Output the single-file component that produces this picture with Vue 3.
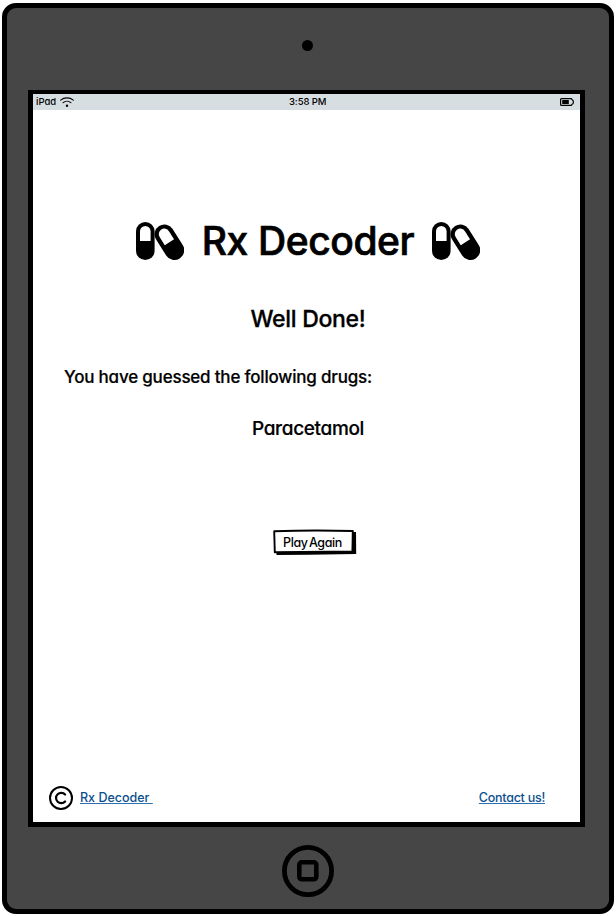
<script setup>
import { h } from 'vue'

const drugs = ['Paracetamol']

const Pills = () =>
  h('svg', { viewBox: '0 0 48 38', width: 48, height: 38, 'aria-hidden': 'true' }, [
    h('rect', { x: 0, y: 0, width: 18.6, height: 38, rx: 9.3 }),
    h('path', { d: 'M4 19V9.2a5.3 5.3 0 0 1 10.6 0V19Z', fill: '#fff' }),
    h('g', { transform: 'translate(33.4 20.2) rotate(-32.4)' }, [
      h('rect', { x: -9.8, y: -19.2, width: 19.6, height: 38.4, rx: 9.8 }),
      h('path', { d: 'M-5.5 0V-9.6a5.5 5.5 0 0 1 11 0V0Z', fill: '#fff' }),
    ]),
  ])
</script>

<template>
  <div class="page">
    <div class="device">
      <div class="top-bezel"><span class="camera"></span></div>
      <div class="screen">
        <header class="status">
          <div class="carrier">
            <span>iPad</span>
            <svg width="14" height="11" viewBox="0 0 14 11" fill="none" stroke="#000" stroke-linecap="round">
              <path d="M.7 3.2C4.2 .1 9.8 .1 13.3 3.2" stroke-width="1.1" />
              <path d="M3.1 5.7C5.3 3.8 8.7 3.8 10.9 5.7" stroke-width="1.1" />
              <circle cx="7" cy="8.8" r="1.2" fill="#000" stroke="none" />
            </svg>
          </div>
          <span class="time">3:58 PM</span>
          <div class="battery">
            <svg width="14" height="8" viewBox="0 0 14 8">
              <path d="M1.5 .6H11.3L12.2 1.8Q13.4 2 13.4 4T12.2 6.2L11.3 7.4H1.5Q.6 7.4 .6 6.5V1.5Q.6 .6 1.5 .6Z" fill="none" stroke="#000" stroke-width="1.2" />
              <rect x="2.2" y="2" width="6.600" height="4" />
            </svg>
          </div>
        </header>
        <main>
          <div class="brand">
            <Pills />
            <h1>Rx Decoder</h1>
            <Pills />
          </div>
          <h2>Well Done!</h2>
          <p class="lead">You have guessed the following drugs:</p>
          <p v-for="drug in drugs" :key="drug" class="drug">{{ drug }}</p>
          <button class="again">
            <svg width="84" height="28" viewBox="0 0 84 28">
              <path d="M3.500 2.500L83 3L83.200 25L35 25.700L3.500 26Z" />
              <path d="M1.200 2.200Q40 1 79.800 2L79.400 22.700Q40 22.300 1.800 23.200Z" fill="#fff" stroke="#000" stroke-width="1.900" stroke-linejoin="round" />
            </svg>
            <span>Play Again</span>
          </button>
        </main>
        <footer>
          <svg width="24" height="24" viewBox="0 0 24 24" fill="none" stroke="#000">
            <circle cx="12" cy="12" r="11" stroke-width="2" />
            <path d="M16.100 8.500A5.200 5.200 0 1 0 16.100 15.500" stroke-width="2.200" stroke-linecap="round" />
          </svg>
          <a class="home">Rx Decoder&nbsp;</a>
          <a class="contact">Contact us!</a>
        </footer>
      </div>
      <div class="bottom-bezel">
        <svg width="52" height="52" viewBox="0 0 52 52" fill="none" stroke="#000">
          <circle cx="26" cy="26" r="23.600" stroke-width="4.800" />
          <rect x="17.300" y="17.300" width="17" height="17" rx="2.500" stroke-width="4.600" />
        </svg>
      </div>
    </div>
  </div>
</template>

<style>
body {
  margin: 0;
  background: #fff;
}
</style>

<style scoped>
.page {
  box-sizing: border-box;
  width: 616px;
  height: 916px;
  padding: 3px 2px 2px;
  font-family: Inter, "Noto Sans", sans-serif;
  font-feature-settings: "cv11";
  color: #000;
}
.device {
  box-sizing: border-box;
  width: 612px;
  height: 911px;
  border: 5px solid #000;
  border-radius: 14px;
  background: #464646;
  display: flex;
  flex-direction: column;
}
.top-bezel {
  height: 82px;
  display: flex;
  justify-content: center;
  align-items: flex-start;
}
.camera {
  width: 11px;
  height: 11px;
  margin: 32px 1px 0 0;
  border-radius: 50%;
  background: #000;
}
.screen {
  box-sizing: border-box;
  width: 557px;
  height: 737px;
  margin-left: 21px;
  border: 5px solid #000;
  border-top-width: 4px;
  background: #fff;
  display: flex;
  flex-direction: column;
}
.status {
  height: 16px;
  flex: none;
  padding: 0 6px 0 3px;
  background: #d7dee1;
  display: grid;
  grid-template-columns: 253px auto 1fr;
  align-items: center;
  font-size: 9.500px;
  line-height: 16px;
  font-weight: 500;
}
.time {
  letter-spacing: -0.1px;
}
.carrier {
  display: flex;
  align-items: center;
  gap: 4px;
}
.battery {
  display: flex;
  justify-content: flex-end;
}
main {
  flex: 1;
  display: flex;
  flex-direction: column;
  align-items: center;
  padding: 111px 0 0 3px;
}
h1, h2, p {
  margin: 0;
  white-space: nowrap;
}
.brand {
  width: 344px;
  height: 40px;
  display: flex;
  justify-content: space-between;
  align-items: center;
}
h1 {
  font-size: 39px;
  line-height: 40px;
  font-weight: 500;
  letter-spacing: -0.4px;
  -webkit-text-stroke: 0.7px #000;
}
h2 {
  margin-top: 43px;
  font-size: 23px;
  line-height: 30px;
  font-weight: 500;
  letter-spacing: -0.3px;
  -webkit-text-stroke: 0.3px #000;
}
.lead {
  align-self: flex-start;
  margin: 30px 0 0 28px;
  font-size: 17px;
  line-height: 26px;
  font-weight: 500;
  letter-spacing: -0.2px;
  -webkit-text-stroke: 0.2px #000;
}
.drug {
  margin-top: 26px;
  font-size: 19px;
  line-height: 26px;
  font-weight: 500;
  letter-spacing: -0.35px;
  -webkit-text-stroke: 0.2px #000;
}
.again {
  display: grid;
  place-items: center start;
  width: 84px;
  height: 28px;
  margin: 87px 0 0 13px;
  padding: 0;
  border: 0;
  background: none;
  color: inherit;
  font: 500 12.500px/22px Inter, sans-serif;
  font-feature-settings: inherit;
  letter-spacing: -0.4px;
  word-spacing: -1.500px;
}
.again > * {
  grid-area: 1 / 1;
}
.again span {
  width: 80px;
  margin-bottom: 1px;
  text-align: center;
}
footer {
  height: 24px;
  flex: none;
  margin: 0 35px 12px 16px;
  display: flex;
  align-items: center;
  color: #0b4f8f;
  font-size: 12.500px;
  line-height: 24px;
  font-weight: 500;
}
footer a {
  text-decoration: underline;
  text-decoration-color: #2f6fab;
  text-decoration-thickness: 1px;
  text-underline-offset: 1px;
  text-decoration-skip-ink: none;
}
.home {
  margin-left: 7px;
}
.contact {
  margin-left: auto;
  letter-spacing: -0.25px;
}
.bottom-bezel {
  flex: 1;
  display: flex;
  justify-content: center;
  align-items: flex-start;
  padding-top: 18px;
}
</style>
